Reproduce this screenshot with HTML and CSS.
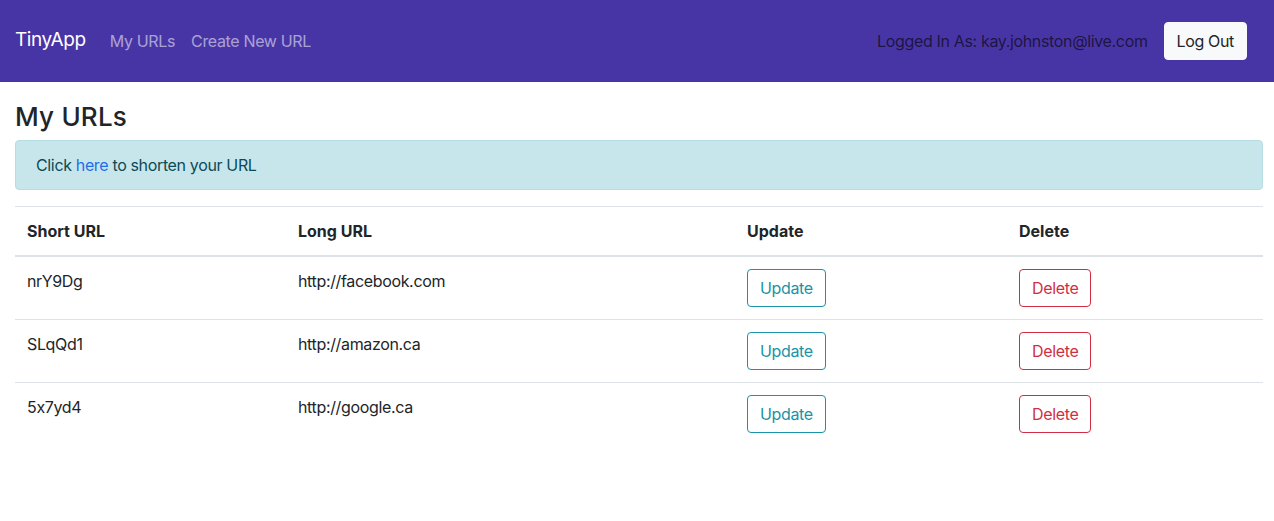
FILE: index.html
```html
<!DOCTYPE html>
<html lang="en">
<head>
<meta charset="utf-8">
<title>TinyApp</title>
<link rel="stylesheet" href="styles.css">
</head>
<body>
<nav class="navbar">
  <a class="brand" href="#">TinyApp</a>
  <ul class="nav-links">
    <li><a href="#">My URLs</a></li>
    <li><a href="#">Create New URL</a></li>
  </ul>
  <div class="nav-right">
    <span class="nav-text">Logged In As: kay.johnston@live.com</span>
    <button class="btn btn-light">Log Out</button>
  </div>
</nav>
<main class="content">
  <h2 class="title">My URLs</h2>
  <div class="alert">Click <a href="#">here</a> to shorten your URL</div>
  <table class="table">
    <thead>
      <tr>
        <th class="c1">Short URL</th>
        <th class="c2">Long URL</th>
        <th class="c3">Update</th>
        <th class="c4">Delete</th>
      </tr>
    </thead>
    <tbody>
      <tr>
        <td>nrY9Dg</td>
        <td>http://facebook.com</td>
        <td><button class="btn btn-outline-info">Update</button></td>
        <td><button class="btn btn-outline-danger">Delete</button></td>
      </tr>
      <tr>
        <td>SLqQd1</td>
        <td>http://amazon.ca</td>
        <td><button class="btn btn-outline-info">Update</button></td>
        <td><button class="btn btn-outline-danger">Delete</button></td>
      </tr>
      <tr>
        <td>5x7yd4</td>
        <td>http://google.ca</td>
        <td><button class="btn btn-outline-info">Update</button></td>
        <td><button class="btn btn-outline-danger">Delete</button></td>
      </tr>
    </tbody>
  </table>
</main>
</body>
</html>
```
FILE: styles.css
```css
* { box-sizing: border-box; }
html, body { margin: 0; padding: 0; }
body {
  font-family: Inter, "Noto Sans", "Liberation Sans", sans-serif;
  font-feature-settings: "calt" 0;
  font-size: 16px;
  line-height: 24px;
  letter-spacing: -0.35px;
  color: #212529;
  background: #fff;
}
a { text-decoration: none; }

.navbar {
  display: flex;
  align-items: center;
  height: 82px;
  padding: 0 27px 0 15px;
  background: #4835a5;
}
.brand {
  font-size: 19px;
  line-height: 30px;
  letter-spacing: -0.4px;
  color: #fff;
  margin-right: 16px;
  margin-top: -2px;
}
.nav-links {
  display: flex;
  list-style: none;
  margin: 0;
  padding: 0;
}
.nav-links a {
  display: block;
  padding: 8px 8px;
  color: rgba(255, 255, 255, 0.55);
}
.nav-right {
  margin-left: auto;
  display: flex;
  align-items: center;
  gap: 16px;
}
.nav-text { color: rgba(0, 0, 0, 0.62); }

.btn {
  font-family: inherit;
  font-feature-settings: inherit;
  letter-spacing: inherit;
  font-size: 16px;
  line-height: 24px;
  padding: 6px 12px;
  border-radius: 4px;
  border: 1px solid transparent;
  background: transparent;
  cursor: pointer;
}
.btn-light {
  background: #f8f9fa;
  border-color: #f8f9fa;
  color: #212529;
}
.btn-outline-info {
  color: #1a93a8;
  border-color: #1a93a8;
}
.btn-outline-danger {
  color: #cf2f44;
  border-color: #cf2f44;
}

.content {
  padding: 0 11px 0 15px;
}
.title {
  font-size: 26px;
  line-height: 30px;
  font-weight: 500;
  letter-spacing: 0.2px;
  margin: 20px 0 8px;
}
.alert {
  padding: 12px 20px;
  margin-bottom: 16px;
  border: 1px solid #b7dde4;
  border-radius: 4px;
  background: #c7e6ec;
  color: #0c4a55;
}
.alert a { color: #1f6fe8; }

.table {
  width: 100%;
  border-collapse: collapse;
  table-layout: fixed;
}
.table th, .table td {
  padding: 12px;
  text-align: left;
  vertical-align: top;
  border-top: 1px solid #dee2e6;
}
.table th {
  font-weight: 700;
  letter-spacing: 0;
  border-bottom: 2px solid #dee2e6;
}
.c1 { width: 271px; }
.c2 { width: 449px; }
.c3 { width: 272px; }
```
